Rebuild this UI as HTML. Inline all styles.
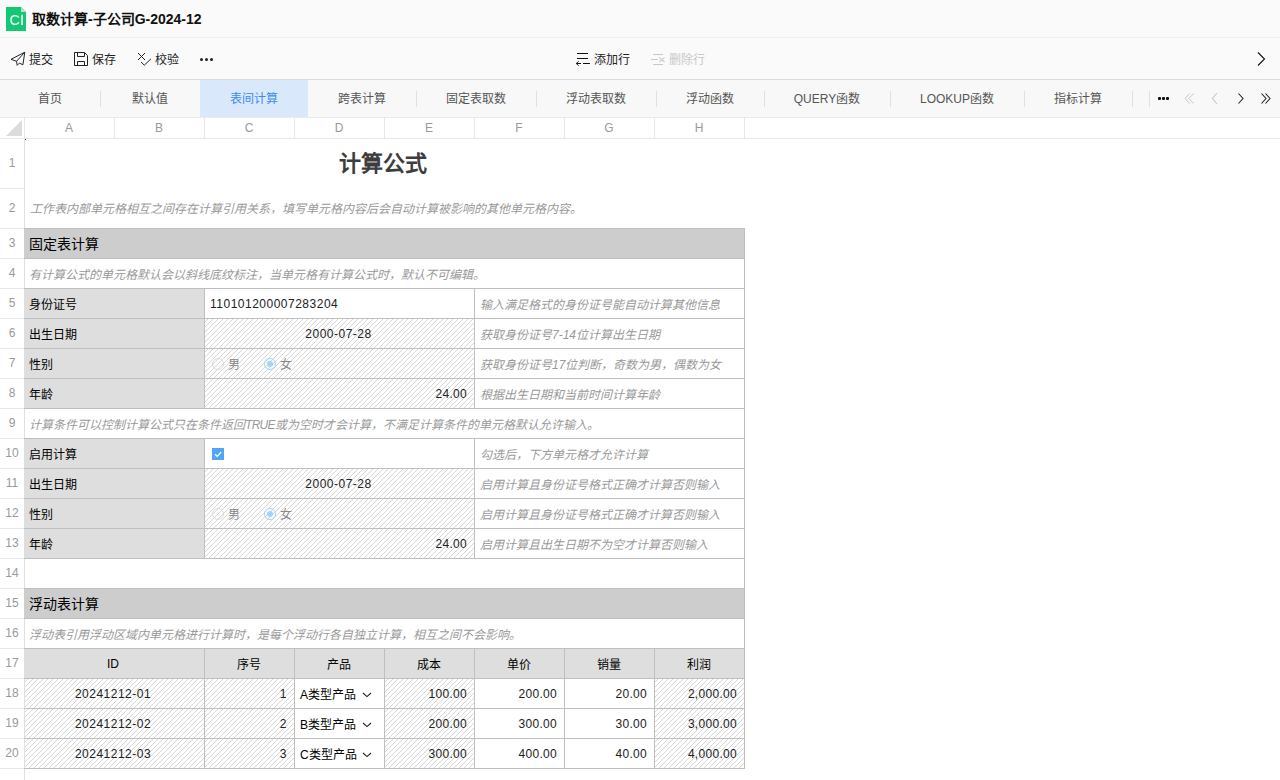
<!DOCTYPE html><html lang="zh-CN"><head><meta charset="utf-8"><style>
*{box-sizing:border-box;margin:0;padding:0}
html,body{width:1280px;height:780px;overflow:hidden;background:#fff;font-family:"Liberation Sans", sans-serif;color:#222}
.a{position:absolute}
.t{position:absolute;white-space:nowrap;font-size:12px;line-height:16px}
.it{font-style:italic;color:#999}
.cell{position:absolute;display:flex;align-items:center;white-space:nowrap;font-size:12px}
.n{letter-spacing:0.5px}
.n2{letter-spacing:0.3px}
.lb{color:#000}
.sh{color:#000}
.lbs{color:#000}
.rh{position:absolute;left:0;width:24px;text-align:center;color:#999;font-size:12px;display:flex;align-items:center;justify-content:center;border-bottom:1px solid #e8e8e8}
.ch{position:absolute;top:118px;height:20px;width:91px;text-align:center;color:#999;font-size:12px;line-height:20px;border-right:1px solid #e8e8e8}
.tab{position:absolute;top:80px;height:37px;line-height:38px;text-align:center;font-size:12px;color:#555}
.sep{position:absolute;top:91px;height:16px;width:1px;background:#e0e0e0}

.hatch{background-image:repeating-linear-gradient(135deg,#fff 0,#fff 2.6px,#d6d6d6 2.6px,#d6d6d6 3.54px)}
.radio{display:inline-block;width:12px;height:12px;border-radius:50%;border:1px solid #d9d9d9;position:relative;margin-left:2px}
.radio.on{border-color:#a6d2fa}
.radio.on::after{content:"";position:absolute;left:2px;top:2px;width:6px;height:6px;border-radius:50%;background:#a6d2fa}
.chk{display:inline-block;width:12px;height:12px;background:#50a6f5;margin-left:2px}
.chk svg{display:block}
</style></head><body><div class="a" style="left:0;top:0;width:1280px;height:38px;background:#fafafa;border-bottom:1px solid #efefef"></div>
<svg class="a" style="left:6px;top:7px" width="20" height="24" viewBox="0 0 20 24"><path d="M0 0H15L20 5V24H0Z" fill="#12c874"/><path d="M15 0L20 5H15Z" fill="#a9e9c8"/><text x="3.5" y="18" font-family="Liberation Sans" font-size="14" fill="#fff">C</text><rect x="15.3" y="7.7" width="1.6" height="10.3" fill="#fff"/></svg>
<div class="t" style="left:32px;top:11px;font-size:14px;line-height:16px;font-weight:bold;color:#111">取数计算-子公司G-2024-12</div>
<div class="a" style="left:0;top:38px;width:1280px;height:42px;background:#fafafa;border-bottom:1px solid #dcdcdc"></div>
<svg class="a" style="left:8px;top:48px" width="20" height="20" viewBox="0 0 20 20"><path d="M16.8 4.2L3 11.3L8.5 13.3L9.2 17.3L11.4 15.1L14.9 16.8Z M16.8 4.2L8.5 13.3" fill="none" stroke="#222" stroke-width="1" stroke-linejoin="round"/></svg>
<div class="t" style="left:29px;top:52px;color:#222">提交</div>
<svg class="a" style="left:74px;top:52px" width="14" height="14" viewBox="0 0 14 14"><path d="M0.5 0.5H10.5L13.5 3.5V13.5H0.5Z M3.5 0.5V4.5H10.5V0.5 M3.5 13.5V9.5H10.5V13.5" fill="none" stroke="#222" stroke-width="1"/></svg>
<div class="t" style="left:92px;top:52px;color:#222">保存</div>
<svg class="a" style="left:136px;top:52px" width="16" height="14" viewBox="0 0 16 14"><path d="M2 1L9 8M9 1L2 8M5 10L8.3 13.2L15 6.8" fill="none" stroke="#222" stroke-width="1"/></svg>
<div class="t" style="left:155px;top:52px;color:#222">校验</div>
<div class="a" style="left:200px;top:58px;width:3px;height:3px;border-radius:50%;background:#222"></div>
<div class="a" style="left:205px;top:58px;width:3px;height:3px;border-radius:50%;background:#222"></div>
<div class="a" style="left:210px;top:58px;width:3px;height:3px;border-radius:50%;background:#222"></div>
<svg class="a" style="left:576px;top:52px" width="15" height="14" viewBox="0 0 15 14"><path d="M1 1.5H12M1 6.5H12M7 11.5H14M0.3 11.5H5M2.6 9.2L0.3 11.5L2.6 13.8" fill="none" stroke="#111" stroke-width="1"/></svg>
<div class="t" style="left:594px;top:52px;color:#222">添加行</div>
<svg class="a" style="left:651px;top:52px" width="15" height="14" viewBox="0 0 15 14"><path d="M2 2.5H12M0 7.5H7M2 12.5H12M8.2 5.4L13.6 10.2M13.6 5.4L8.2 10.2" fill="none" stroke="#c8c8c8" stroke-width="1.1"/></svg>
<div class="t" style="left:669px;top:52px;color:#c8c8c8">删除行</div>
<svg class="a" style="left:1255px;top:51px" width="12" height="16" viewBox="0 0 12 16"><path d="M3 1.5L9.5 8L3 14.5" fill="none" stroke="#111" stroke-width="1.1"/></svg>
<div class="a" style="left:0;top:80px;width:1280px;height:38px;background:#f8f8f8;border-bottom:1px solid #ebebeb"></div>
<div class="tab" style="left:0px;width:100px">首页</div>
<div class="tab" style="left:100px;width:100px">默认值</div>
<div class="sep" style="left:100px"></div>
<div class="tab" style="left:200px;width:108px;background:#d9e8fb;color:#3c8cf0">表间计算</div>
<div class="tab" style="left:308px;width:108px">跨表计算</div>
<div class="tab" style="left:416px;width:120px">固定表取数</div>
<div class="sep" style="left:416px"></div>
<div class="tab" style="left:536px;width:120px">浮动表取数</div>
<div class="sep" style="left:536px"></div>
<div class="tab" style="left:656px;width:108px">浮动函数</div>
<div class="sep" style="left:656px"></div>
<div class="tab" style="left:764px;width:126px">QUERY函数</div>
<div class="sep" style="left:764px"></div>
<div class="tab" style="left:890px;width:134px">LOOKUP函数</div>
<div class="sep" style="left:890px"></div>
<div class="tab" style="left:1024px;width:108px">指标计算</div>
<div class="sep" style="left:1024px"></div>
<div class="sep" style="left:1132px"></div><div class="sep" style="left:1149px"></div>
<div class="a" style="left:1158px;top:97px;width:3px;height:3px;border-radius:1px;background:#111"></div>
<div class="a" style="left:1162px;top:97px;width:3px;height:3px;border-radius:1px;background:#111"></div>
<div class="a" style="left:1166px;top:97px;width:3px;height:3px;border-radius:1px;background:#111"></div>
<svg class="a" style="left:1183px;top:92px" width="13" height="13" viewBox="0 0 13 13"><path d="M6.5 1.5L2 6.5L6.5 11.5M10.5 1.5L6 6.5L10.5 11.5" fill="none" stroke="#c8c8c8" stroke-width="1"/></svg>
<svg class="a" style="left:1210px;top:92px" width="10" height="13" viewBox="0 0 10 13"><path d="M7 1L2.5 6.5L7 12" fill="none" stroke="#c8c8c8" stroke-width="1.1"/></svg>
<svg class="a" style="left:1236px;top:92px" width="10" height="13" viewBox="0 0 10 13"><path d="M2.5 1.5L7 6.5L2.5 11.5" fill="none" stroke="#222" stroke-width="1.1"/></svg>
<svg class="a" style="left:1260px;top:92px" width="13" height="13" viewBox="0 0 13 13"><path d="M1.5 1.5L6 6.5L1.5 11.5M5.5 1.5L10 6.5L5.5 11.5" fill="none" stroke="#222" stroke-width="1.1"/></svg>
<div class="a" style="left:0;top:118px;width:1280px;height:21px;background:#fff;border-bottom:1px solid #e6e6e6"></div>
<svg class="a" style="left:0;top:118px" width="24" height="20"><path d="M22 2V18H6Z" fill="#dcdcdc"/></svg>
<div class="a" style="left:24px;top:118px;width:1px;height:20px;background:#e8e8e8"></div>
<div class="ch" style="left:24px">A</div>
<div class="ch" style="left:114px">B</div>
<div class="ch" style="left:204px">C</div>
<div class="ch" style="left:294px">D</div>
<div class="ch" style="left:384px">E</div>
<div class="ch" style="left:474px">F</div>
<div class="ch" style="left:564px">G</div>
<div class="ch" style="left:654px">H</div>
<div class="a" style="left:24px;top:139px;width:1px;height:641px;background:#e0e0e0"></div>
<div class="rh" style="top:138px;height:51px;border-top:0">1</div>
<div class="rh" style="top:188px;height:41px;border-top:0">2</div>
<div class="rh" style="top:228px;height:31px;border-top:0">3</div>
<div class="rh" style="top:258px;height:31px;border-top:0">4</div>
<div class="rh" style="top:288px;height:31px;border-top:0">5</div>
<div class="rh" style="top:318px;height:31px;border-top:0">6</div>
<div class="rh" style="top:348px;height:31px;border-top:0">7</div>
<div class="rh" style="top:378px;height:31px;border-top:0">8</div>
<div class="rh" style="top:408px;height:31px;border-top:0">9</div>
<div class="rh" style="top:438px;height:31px;border-top:0">10</div>
<div class="rh" style="top:468px;height:31px;border-top:0">11</div>
<div class="rh" style="top:498px;height:31px;border-top:0">12</div>
<div class="rh" style="top:528px;height:31px;border-top:0">13</div>
<div class="rh" style="top:558px;height:31px;border-top:0">14</div>
<div class="rh" style="top:588px;height:31px;border-top:0">15</div>
<div class="rh" style="top:618px;height:31px;border-top:0">16</div>
<div class="rh" style="top:648px;height:31px;border-top:0">17</div>
<div class="rh" style="top:678px;height:31px;border-top:0">18</div>
<div class="rh" style="top:708px;height:31px;border-top:0">19</div>
<div class="rh" style="top:738px;height:31px;border-top:0">20</div>
<div class="rh" style="top:768px;height:31px;border-top:0"></div>
<div class="a" style="left:25px;top:139px;width:1px;height:1px;background:#444"></div>
<div class="t" style="left:23px;top:150.5px;width:720px;text-align:center;font-size:22px;line-height:26px;font-weight:bold;color:#3d3d3d">计算公式</div>
<div class="t it" style="left:30px;top:201px">工作表内部单元格相互之间存在计算引用关系，填写单元格内容后会自动计算被影响的其他单元格内容。</div>
<svg class="a" style="left:0;top:0" width="1280" height="780" shape-rendering="crispEdges"><defs><pattern id="h" x="0" y="0" width="5" height="5" patternUnits="userSpaceOnUse"><rect x="1" y="0" width="1" height="1" fill="#d7d7d7"/><rect x="0" y="1" width="1" height="1" fill="#d7d7d7"/><rect x="4" y="2" width="1" height="1" fill="#d7d7d7"/><rect x="3" y="3" width="1" height="1" fill="#d7d7d7"/><rect x="2" y="4" width="1" height="1" fill="#d7d7d7"/></pattern></defs><rect x="205" y="319" width="269" height="29" fill="url(#h)"/><rect x="205" y="349" width="269" height="29" fill="url(#h)"/><rect x="205" y="379" width="269" height="29" fill="url(#h)"/><rect x="205" y="469" width="269" height="29" fill="url(#h)"/><rect x="205" y="499" width="269" height="29" fill="url(#h)"/><rect x="205" y="529" width="269" height="29" fill="url(#h)"/><rect x="25" y="679" width="179" height="29" fill="url(#h)"/><rect x="205" y="679" width="89" height="29" fill="url(#h)"/><rect x="385" y="679" width="89" height="29" fill="url(#h)"/><rect x="655" y="679" width="89" height="29" fill="url(#h)"/><rect x="25" y="709" width="179" height="29" fill="url(#h)"/><rect x="205" y="709" width="89" height="29" fill="url(#h)"/><rect x="385" y="709" width="89" height="29" fill="url(#h)"/><rect x="655" y="709" width="89" height="29" fill="url(#h)"/><rect x="25" y="739" width="179" height="29" fill="url(#h)"/><rect x="205" y="739" width="89" height="29" fill="url(#h)"/><rect x="385" y="739" width="89" height="29" fill="url(#h)"/><rect x="655" y="739" width="89" height="29" fill="url(#h)"/></svg>
<div class="cell" style="left:24px;top:228px;width:721px;height:31px;border:1px solid #bfbfbf;border-left:0;background:#cdcdcd;justify-content:flex-start;padding-left:5px;font-size:14px;color:#111"><span class="sh" style="position:relative;top:-1px">固定表计算</span></div>
<div class="cell" style="left:24px;top:258px;width:721px;height:31px;border:1px solid #bfbfbf;border-left:0;justify-content:flex-start;padding-left:5px;"><span class="it">有计算公式的单元格默认会以斜线底纹标注，当单元格有计算公式时，默认不可编辑。</span></div>
<div class="cell" style="left:24px;top:288px;width:181px;height:31px;border:1px solid #bfbfbf;border-left:0;background:#dedede;justify-content:flex-start;padding-left:5px;"><span class="lbs">身份证号</span></div>
<div class="cell" style="left:204px;top:288px;width:271px;height:31px;border:1px solid #bfbfbf;justify-content:flex-start;padding-left:5px;"><span class="n">110101200007283204</span></div>
<div class="cell" style="left:474px;top:288px;width:271px;height:31px;border:1px solid #bfbfbf;justify-content:flex-start;padding-left:5px;"><span class="it">输入满足格式的身份证号能自动计算其他信息</span></div>
<div class="cell" style="left:24px;top:318px;width:181px;height:31px;border:1px solid #bfbfbf;border-left:0;background:#dedede;justify-content:flex-start;padding-left:5px;"><span class="lbs">出生日期</span></div>
<div class="cell" style="left:204px;top:318px;width:271px;height:31px;border:1px solid #bfbfbf;padding-right:2px;justify-content:center;"><span class="n">2000-07-28</span></div>
<div class="cell" style="left:474px;top:318px;width:271px;height:31px;border:1px solid #bfbfbf;justify-content:flex-start;padding-left:5px;"><span class="it">获取身份证号7-14位计算出生日期</span></div>
<div class="cell" style="left:24px;top:348px;width:181px;height:31px;border:1px solid #bfbfbf;border-left:0;background:#dedede;justify-content:flex-start;padding-left:5px;"><span class="lbs">性别</span></div>
<div class="cell" style="left:204px;top:348px;width:271px;height:31px;border:1px solid #bfbfbf;justify-content:flex-start;padding-left:5px;"><span class="radio"></span><span style="color:#888;margin-left:4px">男</span><span class="radio on" style="margin-left:24px"></span><span style="color:#888;margin-left:4px">女</span></div>
<div class="cell" style="left:474px;top:348px;width:271px;height:31px;border:1px solid #bfbfbf;justify-content:flex-start;padding-left:5px;"><span class="it">获取身份证号17位判断，奇数为男，偶数为女</span></div>
<div class="cell" style="left:24px;top:378px;width:181px;height:31px;border:1px solid #bfbfbf;border-left:0;background:#dedede;justify-content:flex-start;padding-left:5px;"><span class="lbs">年龄</span></div>
<div class="cell" style="left:204px;top:378px;width:271px;height:31px;border:1px solid #bfbfbf;justify-content:flex-end;padding-right:7px;"><span class="n2">24.00</span></div>
<div class="cell" style="left:474px;top:378px;width:271px;height:31px;border:1px solid #bfbfbf;justify-content:flex-start;padding-left:5px;"><span class="it">根据出生日期和当前时间计算年龄</span></div>
<div class="cell" style="left:24px;top:408px;width:721px;height:31px;border:1px solid #bfbfbf;border-left:0;justify-content:flex-start;padding-left:5px;"><span class="it">计算条件可以控制计算公式只在条件返回<span style="letter-spacing:-0.7px">TRUE</span>或为空时才会计算，不满足计算条件的单元格默认允许输入。</span></div>
<div class="cell" style="left:24px;top:438px;width:181px;height:31px;border:1px solid #bfbfbf;border-left:0;background:#dedede;justify-content:flex-start;padding-left:5px;"><span class="lbs">启用计算</span></div>
<div class="cell" style="left:204px;top:438px;width:271px;height:31px;border:1px solid #bfbfbf;justify-content:flex-start;padding-left:5px;"><span class="chk"><svg width="12" height="12" viewBox="0 0 12 12"><path d="M3 6.2L5.2 8.3L9.2 4" fill="none" stroke="#fff" stroke-width="1.2"/></svg></span></div>
<div class="cell" style="left:474px;top:438px;width:271px;height:31px;border:1px solid #bfbfbf;justify-content:flex-start;padding-left:5px;"><span class="it">勾选后，下方单元格才允许计算</span></div>
<div class="cell" style="left:24px;top:468px;width:181px;height:31px;border:1px solid #bfbfbf;border-left:0;background:#dedede;justify-content:flex-start;padding-left:5px;"><span class="lbs">出生日期</span></div>
<div class="cell" style="left:204px;top:468px;width:271px;height:31px;border:1px solid #bfbfbf;padding-right:2px;justify-content:center;"><span class="n">2000-07-28</span></div>
<div class="cell" style="left:474px;top:468px;width:271px;height:31px;border:1px solid #bfbfbf;justify-content:flex-start;padding-left:5px;"><span class="it">启用计算且身份证号格式正确才计算否则输入</span></div>
<div class="cell" style="left:24px;top:498px;width:181px;height:31px;border:1px solid #bfbfbf;border-left:0;background:#dedede;justify-content:flex-start;padding-left:5px;"><span class="lbs">性别</span></div>
<div class="cell" style="left:204px;top:498px;width:271px;height:31px;border:1px solid #bfbfbf;justify-content:flex-start;padding-left:5px;"><span class="radio"></span><span style="color:#888;margin-left:4px">男</span><span class="radio on" style="margin-left:24px"></span><span style="color:#888;margin-left:4px">女</span></div>
<div class="cell" style="left:474px;top:498px;width:271px;height:31px;border:1px solid #bfbfbf;justify-content:flex-start;padding-left:5px;"><span class="it">启用计算且身份证号格式正确才计算否则输入</span></div>
<div class="cell" style="left:24px;top:528px;width:181px;height:31px;border:1px solid #bfbfbf;border-left:0;background:#dedede;justify-content:flex-start;padding-left:5px;"><span class="lbs">年龄</span></div>
<div class="cell" style="left:204px;top:528px;width:271px;height:31px;border:1px solid #bfbfbf;justify-content:flex-end;padding-right:7px;"><span class="n2">24.00</span></div>
<div class="cell" style="left:474px;top:528px;width:271px;height:31px;border:1px solid #bfbfbf;justify-content:flex-start;padding-left:5px;"><span class="it">启用计算且出生日期不为空才计算否则输入</span></div>
<div class="cell" style="left:24px;top:558px;width:721px;height:31px;border:1px solid #bfbfbf;border-left:0;justify-content:flex-start;"></div>
<div class="cell" style="left:24px;top:588px;width:721px;height:31px;border:1px solid #bfbfbf;border-left:0;background:#cdcdcd;justify-content:flex-start;padding-left:5px;font-size:14px;color:#111"><span class="sh" style="position:relative;top:-1px">浮动表计算</span></div>
<div class="cell" style="left:24px;top:618px;width:721px;height:31px;border:1px solid #bfbfbf;border-left:0;justify-content:flex-start;padding-left:5px;"><span class="it">浮动表引用浮动区域内单元格进行计算时，是每个浮动行各自独立计算，相互之间不会影响。</span></div>
<div class="cell" style="left:24px;top:648px;width:181px;height:31px;border:1px solid #bfbfbf;border-left:0;background:#dedede;padding-right:2px;justify-content:center;"><span class="lb">ID</span></div>
<div class="cell" style="left:204px;top:648px;width:91px;height:31px;border:1px solid #bfbfbf;background:#dedede;padding-right:2px;justify-content:center;"><span class="lb">序号</span></div>
<div class="cell" style="left:294px;top:648px;width:91px;height:31px;border:1px solid #bfbfbf;background:#dedede;padding-right:2px;justify-content:center;"><span class="lb">产品</span></div>
<div class="cell" style="left:384px;top:648px;width:91px;height:31px;border:1px solid #bfbfbf;background:#dedede;padding-right:2px;justify-content:center;"><span class="lb">成本</span></div>
<div class="cell" style="left:474px;top:648px;width:91px;height:31px;border:1px solid #bfbfbf;background:#dedede;padding-right:2px;justify-content:center;"><span class="lb">单价</span></div>
<div class="cell" style="left:564px;top:648px;width:91px;height:31px;border:1px solid #bfbfbf;background:#dedede;padding-right:2px;justify-content:center;"><span class="lb">销量</span></div>
<div class="cell" style="left:654px;top:648px;width:91px;height:31px;border:1px solid #bfbfbf;background:#dedede;padding-right:2px;justify-content:center;"><span class="lb">利润</span></div>
<div class="cell" style="left:24px;top:678px;width:181px;height:31px;border:1px solid #bfbfbf;border-left:0;padding-right:2px;justify-content:center;"><span class="n">20241212-01</span></div>
<div class="cell" style="left:204px;top:678px;width:91px;height:31px;border:1px solid #bfbfbf;justify-content:flex-end;padding-right:7px;"><span class="n">1</span></div>
<div class="cell" style="left:294px;top:678px;width:91px;height:31px;border:1px solid #bfbfbf;justify-content:flex-start;padding-left:5px;"><span class="lb">A类型产品</span><svg style="position:absolute;left:67px;top:13px" width="10" height="6" viewBox="0 0 10 6"><path d="M1 1L5 4.6L9 1" fill="none" stroke="#222" stroke-width="1.1"/></svg></div>
<div class="cell" style="left:384px;top:678px;width:91px;height:31px;border:1px solid #bfbfbf;justify-content:flex-end;padding-right:7px;"><span class="n2">100.00</span></div>
<div class="cell" style="left:474px;top:678px;width:91px;height:31px;border:1px solid #bfbfbf;justify-content:flex-end;padding-right:7px;"><span class="n2">200.00</span></div>
<div class="cell" style="left:564px;top:678px;width:91px;height:31px;border:1px solid #bfbfbf;justify-content:flex-end;padding-right:7px;"><span class="n2">20.00</span></div>
<div class="cell" style="left:654px;top:678px;width:91px;height:31px;border:1px solid #bfbfbf;justify-content:flex-end;padding-right:7px;"><span class="n2">2,000.00</span></div>
<div class="cell" style="left:24px;top:708px;width:181px;height:31px;border:1px solid #bfbfbf;border-left:0;padding-right:2px;justify-content:center;"><span class="n">20241212-02</span></div>
<div class="cell" style="left:204px;top:708px;width:91px;height:31px;border:1px solid #bfbfbf;justify-content:flex-end;padding-right:7px;"><span class="n">2</span></div>
<div class="cell" style="left:294px;top:708px;width:91px;height:31px;border:1px solid #bfbfbf;justify-content:flex-start;padding-left:5px;"><span class="lb">B类型产品</span><svg style="position:absolute;left:67px;top:13px" width="10" height="6" viewBox="0 0 10 6"><path d="M1 1L5 4.6L9 1" fill="none" stroke="#222" stroke-width="1.1"/></svg></div>
<div class="cell" style="left:384px;top:708px;width:91px;height:31px;border:1px solid #bfbfbf;justify-content:flex-end;padding-right:7px;"><span class="n2">200.00</span></div>
<div class="cell" style="left:474px;top:708px;width:91px;height:31px;border:1px solid #bfbfbf;justify-content:flex-end;padding-right:7px;"><span class="n2">300.00</span></div>
<div class="cell" style="left:564px;top:708px;width:91px;height:31px;border:1px solid #bfbfbf;justify-content:flex-end;padding-right:7px;"><span class="n2">30.00</span></div>
<div class="cell" style="left:654px;top:708px;width:91px;height:31px;border:1px solid #bfbfbf;justify-content:flex-end;padding-right:7px;"><span class="n2">3,000.00</span></div>
<div class="cell" style="left:24px;top:738px;width:181px;height:31px;border:1px solid #bfbfbf;border-left:0;padding-right:2px;justify-content:center;"><span class="n">20241212-03</span></div>
<div class="cell" style="left:204px;top:738px;width:91px;height:31px;border:1px solid #bfbfbf;justify-content:flex-end;padding-right:7px;"><span class="n">3</span></div>
<div class="cell" style="left:294px;top:738px;width:91px;height:31px;border:1px solid #bfbfbf;justify-content:flex-start;padding-left:5px;"><span class="lb">C类型产品</span><svg style="position:absolute;left:67px;top:13px" width="10" height="6" viewBox="0 0 10 6"><path d="M1 1L5 4.6L9 1" fill="none" stroke="#222" stroke-width="1.1"/></svg></div>
<div class="cell" style="left:384px;top:738px;width:91px;height:31px;border:1px solid #bfbfbf;justify-content:flex-end;padding-right:7px;"><span class="n2">300.00</span></div>
<div class="cell" style="left:474px;top:738px;width:91px;height:31px;border:1px solid #bfbfbf;justify-content:flex-end;padding-right:7px;"><span class="n2">400.00</span></div>
<div class="cell" style="left:564px;top:738px;width:91px;height:31px;border:1px solid #bfbfbf;justify-content:flex-end;padding-right:7px;"><span class="n2">40.00</span></div>
<div class="cell" style="left:654px;top:738px;width:91px;height:31px;border:1px solid #bfbfbf;justify-content:flex-end;padding-right:7px;"><span class="n2">4,000.00</span></div></body></html>
